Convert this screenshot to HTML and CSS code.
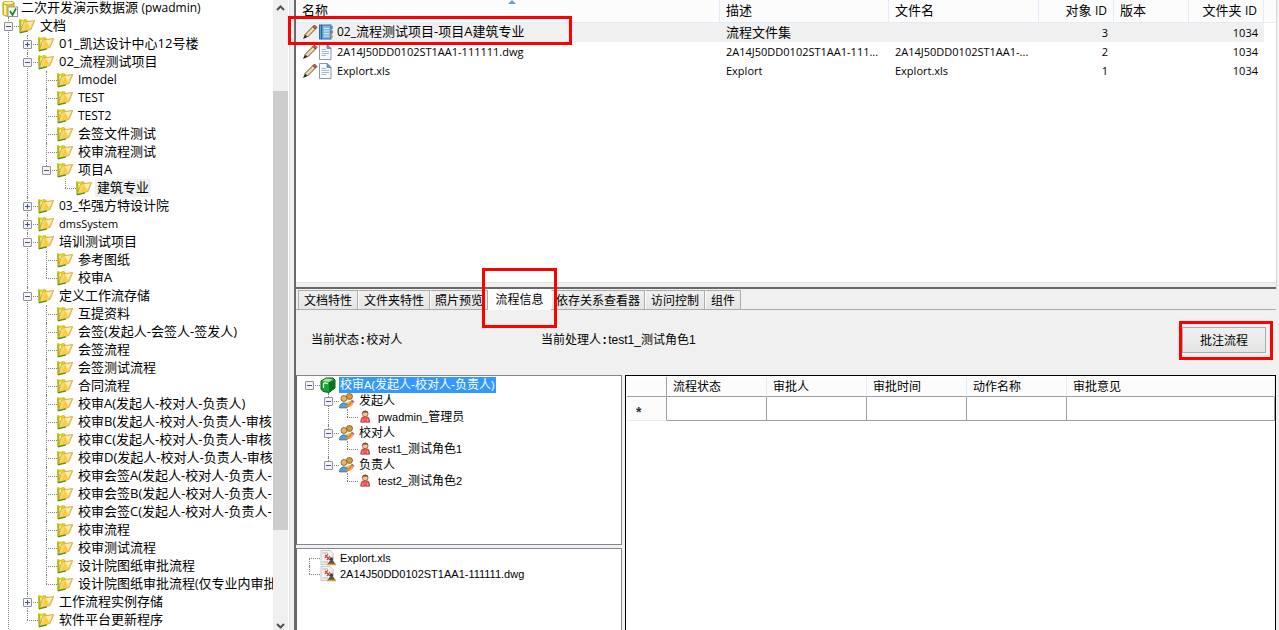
FILE: index.html
```html
<!DOCTYPE html>
<html lang="zh-CN">
<head>
<meta charset="UTF-8">
<meta name="viewport" content="width=device-width, initial-scale=1.0">
<title>二次开发演示数据源</title>
<link rel="stylesheet" href="styles.css">
</head>
<body>
<svg class="sprite" xmlns="http://www.w3.org/2000/svg">
    <symbol id="folder" viewBox="0 0 16 16">
        <path d="M0.5 1.5 L4 2.5 L5 1.5 L8 2 L8 13 L1 14.5 Z" fill="#e6df00" stroke="#b5a800" stroke-width="0.6"/>
        <path d="M0.5 2 V14.5 L3 13 L2 3 Z" fill="#a9b52a"/>
        <path d="M2.5 4 L12 3 L12 10 L3 13 Z" fill="#fffbe0"/>
        <path d="M4.5 4 L15.7 2.5 L12 11.5 L1.5 14 Z" fill="#f7d76a" stroke="#c79a2a" stroke-width="0.7"/>
        <path d="M8 4.5 L5 12.5 L11 9.5 Z" fill="#ffc93a"/>
        <path d="M8 4.5 L14 3.5 L11 9.5 Z" fill="#fdeeb5"/>
        <path d="M0.8 14.9 L9 13" stroke="#3f9420" stroke-width="1.2"/>
    </symbol>
    <symbol id="database" viewBox="0 0 16 16">
        <path d="M1 2 V13 C1 16 12 16 12 13 V2 Z" fill="#ecd21f" stroke="#b79a12"/>
        <path d="M3 3 V14" stroke="#fff6a6" stroke-width="2"/>
        <ellipse cx="6.5" cy="2" rx="5.5" ry="2" fill="#f7f0b0" stroke="#b79a12"/>
        <rect x="6" y="6" width="9.5" height="9.5" fill="#fff" stroke="#8a9aa0"/>
        <path d="M8 10 L10.5 14 L14 7.5" fill="none" stroke="#1e8a2c" stroke-width="1.8"/>
    </symbol>
    <symbol id="pencil" viewBox="0 0 16 16">
        <path d="M1 15 L3 10.5 L5.5 13 Z" fill="#222"/>
        <path d="M3 10.5 L11 2.5 L13.5 5 L5.5 13 Z" fill="#f3d9a0" stroke="#4a3a20" stroke-width="0.9"/>
        <path d="M11 2.5 L12.5 1 L15 3.5 L13.5 5 Z" fill="#d8604c" stroke="#5a2a20" stroke-width="0.8"/>
    </symbol>
    <symbol id="book" viewBox="0 0 16 16">
        <rect x="1.5" y="1" width="11.5" height="14" fill="#78b7e6" stroke="#2b6da8"/>
        <path d="M3.5 1 V15" stroke="#245e96" stroke-width="1.5"/>
        <path d="M6 4.5 H11 M6 7 H11 M6 9.5 H11 M6 12 H11" stroke="#d9eefb"/>
        <path d="M14 2 V5" stroke="#3a8fd0" stroke-width="1.6"/>
        <path d="M14 6.5 V9.5" stroke="#d04a3a" stroke-width="1.6"/>
        <path d="M14 11 V14" stroke="#d9a52a" stroke-width="1.6"/>
    </symbol>
    <symbol id="page" viewBox="0 0 16 16">
        <path d="M1.5 0.5 H9 L13 4.5 V15.5 H1.5 Z" fill="#f7fafd" stroke="#8b98a8"/>
        <path d="M9 0.5 V4.5 H13 Z" fill="#6f9fd0" stroke="#51759c" stroke-width="0.7"/>
        <path d="M3.5 5.5 H8 M3.5 7.5 H11 M3.5 9.5 H11 M3.5 11.5 H8" stroke="#a9b9c9"/>
    </symbol>
    <symbol id="cube" viewBox="0 0 16 16">
        <path d="M1 4 L6 1 L13 1 L15 3 V11 L9 15.5 L3 14.5 L1 12 Z" fill="#17a534" stroke="#075a18"/>
        <path d="M2 4 L6 1.5 L13 2 L9 5 Z" fill="#9bea96"/>
        <path d="M9 5.5 L14.5 3.5 V10.5 L9 15 Z" fill="#0a6f1f"/>
        <path d="M3.5 11 V7 C3.5 5.5 6 6 8 6.5" fill="none" stroke="#d5ffd0" stroke-width="1.3"/>
    </symbol>
    <symbol id="group" viewBox="0 0 16 16">
        <circle cx="10.5" cy="3.5" r="3" fill="#d79a3c" stroke="#6d4310" stroke-width="0.7"/>
        <path d="M6.5 13 C6.5 7 14 7 14.5 11 L11 14 Z" fill="#e9b64f"/>
        <circle cx="5" cy="5.5" r="3" fill="#eab566" stroke="#6d4310" stroke-width="0.7"/>
        <path d="M0.5 15 C0 9 8 8 9 13 L8 15 Z" fill="#5c9bd8" stroke="#2f5f96" stroke-width="0.6"/>
        <path d="M7.5 14.5 L14 7.5" stroke="#f2861e" stroke-width="2"/>
        <path d="M12.5 7 L15 9.5" stroke="#9a65c0" stroke-width="1.2"/>
    </symbol>
    <symbol id="user" viewBox="-1 -1 20 20">
        <path d="M2.5 15.5 C2.5 9 5 8.5 8 8.5 C11 8.5 13.5 9 13.5 15.5 Z" fill="#e8585c" stroke="#962428" stroke-width="0.8"/>
        <circle cx="8" cy="5" r="3.6" fill="#f1c39a" stroke="#74401c" stroke-width="0.7"/>
        <path d="M4.2 5 C4 0 12 0 11.8 5 L10 3.5 H6 Z" fill="#7b3f1c"/>
        <path d="M5 11.5 V15 M11 11.5 V15" stroke="#ffb5b5" stroke-width="0.8"/>
    </symbol>
    <symbol id="stamp" viewBox="0 0 16 16">
        <path d="M1 0.5 H10 L13 3.5 V14.5 H1 Z" fill="#f3f3f3" stroke="#bbb" stroke-width="0.8"/>
        <path d="M2.5 3 H8 M2.5 12 H8" stroke="#b5b5b5"/>
        <path d="M5 5 L10 10 M5 8 L8 4 M7 10 L10 6" stroke="#d8382c" stroke-width="1.2"/>
        <circle cx="11.5" cy="9" r="1.8" fill="#444"/>
        <path d="M10.5 10 H12.5 L15.5 14 H7.5 Z" fill="#5a5548"/>
        <path d="M7 14.5 H16" stroke="#d4a72c" stroke-width="1.6"/>
    </symbol>
</svg>

<div class="window">
    <aside class="sidebar">
        <nav class="tree-view">
            <div class="root"><svg><use href="#database"/></svg><span>二次开发演示数据源 <small>(pwadmin)</small></span></div>
            <ul class="tree more">
                <li><div class="row"><button class="toggle" aria-label="折叠"></button><svg><use href="#folder"/></svg><span>文档</span></div>
                    <ul>
                        <li><div class="row"><button class="toggle plus" aria-label="展开"></button><svg><use href="#folder"/></svg><span>01_凯达设计中心12号楼</span></div></li>
                        <li><div class="row"><button class="toggle" aria-label="折叠"></button><svg><use href="#folder"/></svg><span>02_流程测试项目</span></div>
                            <ul>
                                <li><div class="row"><svg><use href="#folder"/></svg><span class="latin">Imodel</span></div></li>
                                <li><div class="row"><svg><use href="#folder"/></svg><span class="latin">TEST</span></div></li>
                                <li><div class="row"><svg><use href="#folder"/></svg><span class="latin">TEST2</span></div></li>
                                <li><div class="row"><svg><use href="#folder"/></svg><span>会签文件测试</span></div></li>
                                <li><div class="row"><svg><use href="#folder"/></svg><span>校审流程测试</span></div></li>
                                <li><div class="row"><button class="toggle" aria-label="折叠"></button><svg><use href="#folder"/></svg><span>项目A</span></div>
                                    <ul>
                                        <li><div class="row"><svg><use href="#folder"/></svg><span class="current">建筑专业</span></div></li>
                                    </ul>
                                </li>
                            </ul>
                        </li>
                        <li><div class="row"><button class="toggle plus" aria-label="展开"></button><svg><use href="#folder"/></svg><span><small>03_</small>华强方特设计院</span></div></li>
                        <li><div class="row"><button class="toggle plus" aria-label="展开"></button><svg><use href="#folder"/></svg><span class="latin"><small>dmsSystem</small></span></div></li>
                        <li><div class="row"><button class="toggle" aria-label="折叠"></button><svg><use href="#folder"/></svg><span>培训测试项目</span></div>
                            <ul>
                                <li><div class="row"><svg><use href="#folder"/></svg><span>参考图纸</span></div></li>
                                <li><div class="row"><svg><use href="#folder"/></svg><span>校审A</span></div></li>
                            </ul>
                        </li>
                        <li><div class="row"><button class="toggle" aria-label="折叠"></button><svg><use href="#folder"/></svg><span>定义工作流存储</span></div>
                            <ul>
                                <li><div class="row"><svg><use href="#folder"/></svg><span>互提资料</span></div></li>
                                <li><div class="row"><svg><use href="#folder"/></svg><span>会签(发起人-会签人-签发人)</span></div></li>
                                <li><div class="row"><svg><use href="#folder"/></svg><span>会签流程</span></div></li>
                                <li><div class="row"><svg><use href="#folder"/></svg><span>会签测试流程</span></div></li>
                                <li><div class="row"><svg><use href="#folder"/></svg><span>合同流程</span></div></li>
                                <li><div class="row"><svg><use href="#folder"/></svg><span>校审A(发起人-校对人-负责人)</span></div></li>
                                <li><div class="row"><svg><use href="#folder"/></svg><span>校审B(发起人-校对人-负责人-审核</span></div></li>
                                <li><div class="row"><svg><use href="#folder"/></svg><span>校审C(发起人-校对人-负责人-审核</span></div></li>
                                <li><div class="row"><svg><use href="#folder"/></svg><span>校审D(发起人-校对人-负责人-审核</span></div></li>
                                <li><div class="row"><svg><use href="#folder"/></svg><span>校审会签A(发起人-校对人-负责人-</span></div></li>
                                <li><div class="row"><svg><use href="#folder"/></svg><span>校审会签B(发起人-校对人-负责人-</span></div></li>
                                <li><div class="row"><svg><use href="#folder"/></svg><span>校审会签C(发起人-校对人-负责人-</span></div></li>
                                <li><div class="row"><svg><use href="#folder"/></svg><span>校审流程</span></div></li>
                                <li><div class="row"><svg><use href="#folder"/></svg><span>校审测试流程</span></div></li>
                                <li><div class="row"><svg><use href="#folder"/></svg><span>设计院图纸审批流程</span></div></li>
                                <li><div class="row"><svg><use href="#folder"/></svg><span>设计院图纸审批流程<small>(</small>仅专业内审批</span></div></li>
                            </ul>
                        </li>
                        <li><div class="row"><button class="toggle plus" aria-label="展开"></button><svg><use href="#folder"/></svg><span>工作流程实例存储</span></div></li>
                        <li><div class="row"><svg><use href="#folder"/></svg><span>软件平台更新程序</span></div></li>
                    </ul>
                </li>
            </ul>
        </nav>
        <div class="scrollbar">
            <button class="arrow" aria-label="向上"><svg viewBox="0 0 9 6"><path d="M1 5 L4.5 1.5 L8 5"/></svg></button>
            <div class="track"><div class="thumb"></div></div>
            <button class="arrow" aria-label="向下"><svg viewBox="0 0 9 6"><path d="M1 1 L4.5 4.5 L8 1"/></svg></button>
        </div>
        <div class="splitter"></div>
    </aside>

    <main class="content">
        <section class="files">
            <table class="file-list">
                <colgroup><col class="c-name"><col class="c-desc"><col class="c-file"><col class="c-id"><col class="c-id"><col class="c-id"><col></colgroup>
                <thead>
                    <tr><th>名称<i class="sort"></i></th><th>描述</th><th>文件名</th><th class="num">对象 <small>ID</small></th><th>版本</th><th class="num">文件夹 <small>ID</small></th><th></th></tr>
                </thead>
                <tbody>
                    <tr class="selected">
                        <td><div class="name"><svg><use href="#pencil"/></svg><svg><use href="#book"/></svg><span><small>02_</small>流程测试项目-项目A建筑专业</span><i class="mark mark-row"></i></div></td>
                        <td>流程文件集</td><td></td><td class="num">3</td><td></td><td class="num">1034</td><td class="rest"></td>
                    </tr>
                    <tr>
                        <td><div class="name"><svg><use href="#pencil"/></svg><svg><use href="#page"/></svg><span>2A14J50DD0102ST1AA1-111111.dwg</span></div></td>
                        <td>2A14J50DD0102ST1AA1-111...</td><td>2A14J50DD0102ST1AA1-...</td><td class="num">2</td><td></td><td class="num">1034</td><td></td>
                    </tr>
                    <tr>
                        <td><div class="name"><svg><use href="#pencil"/></svg><svg><use href="#page"/></svg><span>Explort.xls</span></div></td>
                        <td>Explort</td><td>Explort.xls</td><td class="num">1</td><td></td><td class="num">1034</td><td></td>
                    </tr>
                </tbody>
            </table>
        </section>

        <section class="details">
            <div class="tabs">
                <button>文档特性</button>
                <button>文件夹特性</button>
                <button class="covered">照片预览</button>
                <button class="active">流程信息<i class="mark mark-tab"></i></button>
                <button class="after">依存关系查看器</button>
                <button>访问控制</button>
                <button>组件</button>
            </div>
            <div class="status">
                <div class="state">当前状态<b>:</b>校对人</div>
                <div class="handler">当前处理人<b>:</b>test1_测试角色1</div>
                <button class="annotate">批注流程<i class="mark mark-button"></i></button>
            </div>
            <div class="panels">
                <div class="flow">
                    <div class="box members">
                        <ul class="tree small">
                            <li><div class="row"><button class="toggle" aria-label="折叠"></button><svg><use href="#cube"/></svg><span class="picked">校审<small>A(</small>发起人-校对人-负责人<small>)</small></span></div>
                                <ul>
                                    <li><div class="row"><button class="toggle" aria-label="折叠"></button><svg><use href="#group"/></svg><span>发起人</span></div>
                                        <ul><li><div class="row"><svg><use href="#user"/></svg><span><small>pwadmin_</small>管理员</span></div></li></ul>
                                    </li>
                                    <li><div class="row"><button class="toggle" aria-label="折叠"></button><svg><use href="#group"/></svg><span>校对人</span></div>
                                        <ul><li><div class="row"><svg><use href="#user"/></svg><span><small>test1_</small>测试角色<small>1</small></span></div></li></ul>
                                    </li>
                                    <li><div class="row"><button class="toggle" aria-label="折叠"></button><svg><use href="#group"/></svg><span>负责人</span></div>
                                        <ul><li><div class="row"><svg><use href="#user"/></svg><span><small>test2_</small>测试角色<small>2</small></span></div></li></ul>
                                    </li>
                                </ul>
                            </li>
                        </ul>
                    </div>
                    <div class="box attachments">
                        <ul class="tree small">
                            <li><div class="row"><svg><use href="#stamp"/></svg><span><small>Explort.xls</small></span></div></li>
                            <li><div class="row"><svg><use href="#stamp"/></svg><span><small>2A14J50DD0102ST1AA1-111111.dwg</small></span></div></li>
                        </ul>
                    </div>
                </div>
                <div class="history">
                    <table>
                        <colgroup><col class="g-head"><col class="g-col"><col class="g-col"><col class="g-col"><col class="g-col"><col></colgroup>
                        <thead>
                            <tr><th></th><th>流程状态</th><th>审批人</th><th>审批时间</th><th>动作名称</th><th>审批意见</th></tr>
                        </thead>
                        <tbody>
                            <tr><td class="new">*</td><td></td><td></td><td></td><td></td><td></td></tr>
                        </tbody>
                    </table>
                </div>
            </div>
        </section>
    </main>
</div>
</body>
</html>
```
FILE: styles.css
```css
* {
    box-sizing: border-box;
}
body {
    margin: 0;
    background: #f0f0f0;
    color: #000;
    font-family: "Open Sans", "Noto Sans CJK SC", sans-serif;
    font-size: 13px;
}
button {
    margin: 0;
    padding: 0;
    border: 0;
    color: inherit;
    font: inherit;
}
small {
    font-size: 12px;
}
svg {
    width: 16px;
    height: 16px;
    flex: none;
}
.sprite {
    display: none;
}
.window {
    display: flex;
    height: 100vh;
    overflow: hidden;
}

/* folder tree */
.sidebar {
    display: flex;
    flex: none;
    width: 296px;
    background: #fff;
}
.tree-view {
    display: flex;
    flex-direction: column;
    flex: 1;
    overflow: hidden;
    white-space: nowrap;
}
.root {
    display: flex;
    align-items: center;
    gap: 3px;
    height: 17px;
    padding-left: 2px;
    line-height: 16px;
}
.root span {
    padding-bottom: 2px;
}
.tree, .tree ul {
    list-style: none;
    margin: 0;
    padding: 0;
}
.tree.more {
    flex: 1;
}
.tree ul {
    margin-left: 19px;
}
.tree li {
    position: relative;
}
.tree li::before {
    content: "";
    position: absolute;
    left: 8px;
    top: 0;
    bottom: 0;
    border-left: 1px dotted #808080;
}
.tree li:last-child::before {
    bottom: auto;
    height: 9px;
}
.tree.more > li::before {
    bottom: 0;
    height: auto;
}
.row {
    position: relative;
    display: flex;
    align-items: center;
    height: 18px;
    padding-left: 19px;
    line-height: 16px;
}
.row::before {
    content: "";
    position: absolute;
    left: 8px;
    top: 9px;
    width: 11px;
    border-top: 1px dotted #808080;
}
.row span {
    margin-left: 3px;
    padding: 0 2px 2px 2px;
}
.row .latin {
    padding-bottom: 0;
    font-size: 12px;
}
.latin small {
    font-size: 11px;
}
.row .current {
    background: #f0f0f0;
}
.toggle {
    position: absolute;
    left: 4px;
    top: 5px;
    width: 9px;
    height: 9px;
    border: 1px solid #919191;
    border-radius: 1px;
    background: linear-gradient(#3c5a9a, #3c5a9a) center / 5px 1px no-repeat, #f4f4f4;
}
.toggle.plus {
    background: linear-gradient(#3c5a9a, #3c5a9a) center / 5px 1px no-repeat, linear-gradient(#3c5a9a, #3c5a9a) center / 1px 5px no-repeat, #f4f4f4;
}

.scrollbar {
    display: flex;
    flex-direction: column;
    width: 15px;
    background: #f0f0f0;
}
.arrow {
    height: 16px;
    flex: none;
    display: flex;
    align-items: center;
    justify-content: center;
    background: none;
}
.arrow:last-child {
    height: 8px;
}
.arrow svg {
    width: 9px;
    height: 6px;
    fill: none;
    stroke: #505050;
    stroke-width: 2px;
}
.track {
    display: flex;
    flex-direction: column;
    flex: 1;
}
.track::before {
    content: "";
    flex: 75;
}
.track::after {
    content: "";
    flex: 92;
}
.thumb {
    flex: 439;
    background: #cdcdcd;
}
.splitter {
    width: 8px;
    background: #f0f0f0;
    border-right: 2px solid #696969;
    box-shadow: inset 1px 0 #fff, inset 2px 0 #e3e3e3;
}

.content {
    display: grid;
    grid-template-rows: 289fr 341fr;
    flex: 1;
    min-width: 0;
    margin-right: 3px;
}
.files {
    background: #fff;
    border-bottom: 2px solid #696969;
    box-shadow: 1px 0 #d9d9d9, inset 0 -4px #f0f0f0, inset 0 -5px #e3e3e3;
}
table {
    width: 100%;
    border-collapse: separate;
    border-spacing: 0;
    table-layout: fixed;
}
th {
    font-weight: normal;
    text-align: left;
}
.c-name { width: 424px; }
.c-desc { width: 169px; }
.c-file { width: 150px; }
.c-id { width: 75px; }
.file-list th, .file-list td {
    height: 19px;
    padding: 0 6px;
    line-height: 16px;
    white-space: nowrap;
}
.file-list td {
    font-size: 11px;
}
.file-list th {
    position: relative;
    height: 23px;
    padding-bottom: 2px;
    background: #fcfcfc;
    border-right: 1px solid #e3edf9;
    border-bottom: 1px solid #e3edf9;
}
.file-list th:last-child {
    border-right: 0;
}
.file-list .num {
    text-align: right;
}
.file-list .selected td {
    padding-bottom: 2px;
    background: #f0f0f0;
    font-size: 13px;
}
.file-list .selected .num {
    padding-bottom: 0;
    font-size: 11px;
}
.file-list .selected .rest {
    background: #fff;
}
.sort {
    position: absolute;
    left: 50%;
    top: 0;
    border: 4px solid transparent;
    border-top: 0;
    border-bottom: 4px solid #6ba0c0;
}
.name {
    position: relative;
    display: flex;
    align-items: center;
}
.name span {
    margin-left: 3px;
}

/* red highlight frames */
.mark {
    position: absolute;
    z-index: 5;
    border: 3px solid #f00;
    pointer-events: none;
}
.mark-row {
    left: -14px;
    top: -7px;
    width: 284px;
    height: 29px;
}
.mark-tab {
    inset: -21px -6px -18px -6px;
}
.mark-button {
    inset: -7px -8px -8px -4px;
}

.details {
    display: flex;
    flex-direction: column;
    min-height: 0;
    font-size: 12px;
    font-family: "Liberation Sans", "Noto Sans CJK SC", sans-serif;
}
.details small {
    font-size: 11px;
}
.tabs {
    display: flex;
    align-items: flex-end;
    flex: none;
    height: 21px;
    padding-left: 2px;
    border-bottom: 1px solid #acacac;
}
.tabs button {
    height: 19px;
    padding: 2px 5px 0 5px;
    border: 1px solid #acacac;
    border-left-color: #fff;
    border-bottom: 0;
    background: linear-gradient(#f0f0f0, #e5e5e5);
    line-height: 16px;
    white-space: nowrap;
}
.tabs button:first-child {
    border-left-color: #acacac;
}
.tabs .covered {
    width: 58px;
    padding: 2px 4px 0 4px;
    overflow: hidden;
    text-align: left;
}
.tabs .active {
    position: relative;
    width: 63px;
    height: 21px;
    margin-bottom: -1px;
    padding: 0;
    border: 0;
    background: #fff;
}
.tabs .after {
    padding: 2px 4px 0 4px;
}
.status {
    display: flex;
    align-items: center;
    flex: none;
    height: 65px;
    padding: 0 10px 5px 15px;
}
.state, .handler {
    padding-bottom: 2px;
}
.status b {
    font-family: "Liberation Mono", monospace;
}
.state {
    width: 230px;
}
.handler {
    flex: 1;
}
.annotate {
    position: relative;
    width: 84px;
    height: 26px;
    padding-bottom: 2px;
    border: 1px solid #adadad;
    background: linear-gradient(#f0f0f0, #e5e5e5);
}
.panels {
    display: flex;
    flex: 1;
    gap: 3px;
    min-height: 0;
}
.flow {
    display: flex;
    flex-direction: column;
    flex: none;
    gap: 3px;
    width: 326px;
}
.box {
    padding: 1px 4px;
    border: 1px solid #828790;
    border-left-color: #696969;
    background: #fff;
    white-space: nowrap;
}
.members {
    height: 170px;
}
.attachments {
    flex: 1;
    border-bottom: 0;
}
.small .row {
    height: 16px;
}
.small .row::before {
    top: 8px;
}
.small .row span {
    padding: 0 1px;
}
.small .toggle {
    top: 4px;
}
.small li:last-child::before {
    height: 8px;
}
.small > li:first-child::before {
    top: 8px;
}
.small > li:only-child::before {
    display: none;
}
.row .picked {
    background: #39f;
    color: #fff;
}
.history {
    flex: 1;
    min-width: 0;
    padding: 1px 0 0 1px;
    border: 1px solid #000;
    border-bottom: 0;
    background: #fff;
}
.g-head { width: 40px; }
.g-col { width: 100px; }
.history th {
    height: 20px;
    padding: 1px 6px 0 6px;
    background: #fcfcfc;
    border-right: 1px solid #e3edf9;
    border-bottom: 1px solid #a0a0a0;
    line-height: 18px;
}
.history th:first-child {
    border-right-color: #a0a0a0;
}
.history td {
    height: 24px;
    padding: 0;
    border-right: 1px solid #a0a0a0;
    border-bottom: 1px solid #a0a0a0;
}
.history .new {
    padding: 7px 0 0 9px;
    background: #fcfcfc;
    border-bottom-color: #e3edf9;
    color: #333;
    font-size: 14px;
    font-weight: bold;
    line-height: 16px;
}
```
